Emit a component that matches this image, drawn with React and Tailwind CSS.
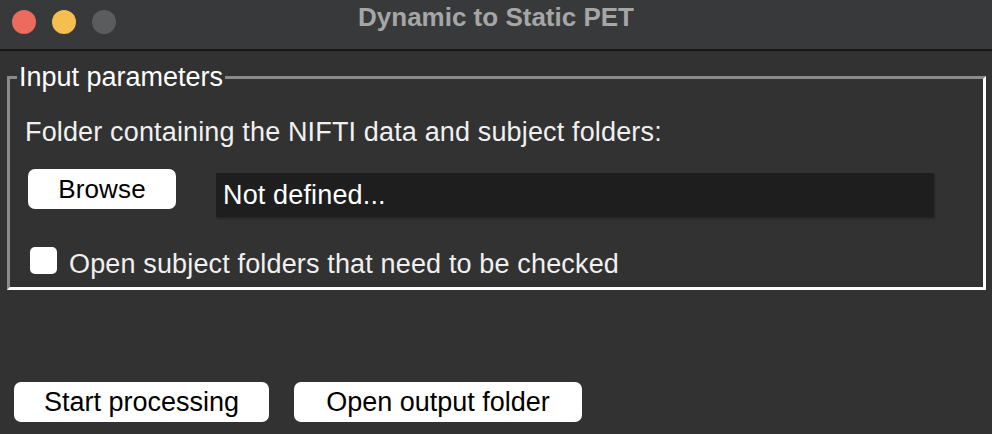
export default function App() {
  return (
    <div className="w-[992px] h-[434px] overflow-hidden bg-[#323232] text-[#f0f0f0] font-['Liberation_Sans',Arial,sans-serif]">
      {/* title bar */}
      <div className="relative flex h-[51px] items-start border-b-2 border-[#161616] bg-[#38393b]">
        <div className="flex gap-4 pl-3 pt-[10px]">
          <span className="h-6 w-6 rounded-full bg-[#ec6a5e]" />
          <span className="h-6 w-6 rounded-full bg-[#f4bf4f]" />
          <span className="h-6 w-6 rounded-full bg-[#5a5c5e]" />
        </div>
        <div className="absolute inset-x-0 top-[2px] text-center text-[26px] leading-[30px] font-bold text-[#a6a6a6]">
          Dynamic to Static PET
        </div>
      </div>

      <fieldset className="ml-[7px] mt-[11px] w-[979px] border-[3px] border-t-[#8b8b8b] border-l-[#8b8b8b] border-r-white border-b-white pb-[8px]">
        <legend className="ml-[7px] px-[2px] text-[27px] leading-[30px] text-white">Input parameters</legend>

        <div className="pl-[15px] tracking-[0.15px]">
          <div className="mt-[25px] text-[27px] leading-[30px]">Folder containing the NIFTI data and subject folders:</div>

          <div className="mt-[22px] flex items-start">
            <button className="ml-[3px] h-[40px] w-[148px] rounded-[7px] bg-white text-[26px] leading-[30px] text-black">
              Browse
            </button>
            <div className="ml-[40px] mt-[4px] h-[44px] w-[718px] bg-[#1e1e1e] pl-[7px] text-[27px] leading-[44px] text-white shadow-[1px_2px_2px_rgba(0,0,0,0.25)]">
              Not defined...
            </div>
          </div>

          <label className="mt-[30px] flex items-start gap-[12px]">
            <span className="ml-[5px] h-[27px] w-[27px] rounded-[5px] bg-white" />
            <span className="mt-[2px] text-[27px] leading-[30px]">Open subject folders that need to be checked</span>
          </label>
        </div>
      </fieldset>

      <div className="mt-[92px] flex gap-[25px] pl-[14px]">
        <button className="h-[40px] w-[255px] rounded-[7px] bg-white text-[27px] leading-[30px] text-black">
          Start processing
        </button>
        <button className="h-[40px] w-[288px] rounded-[7px] bg-white text-[27px] leading-[30px] text-black">
          Open output folder
        </button>
      </div>
    </div>
  );
}
